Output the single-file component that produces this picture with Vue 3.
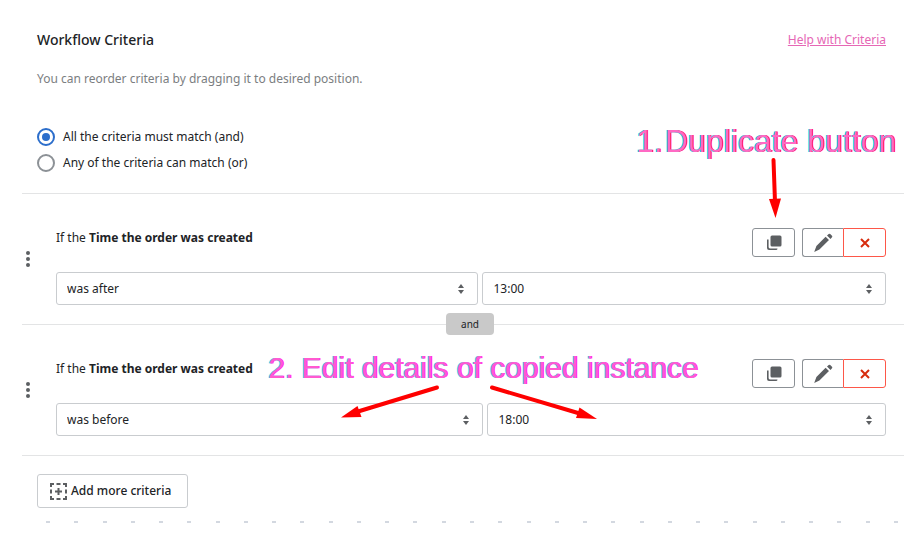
<template>
  <main class="workflow">
    <header class="workflow__header">
      <div class="workflow__title">
        <h2 class="workflow__h2">Workflow Criteria</h2>
        <a href="#" class="workflow__help">Help with Criteria</a>
      </div>
      <p class="workflow__hint">
        You can reorder criteria by dragging it to desired position.
      </p>
      <div class="workflow__modes">
        <label v-for="item in modes" :key="item.value" class="mode">
          <input
            v-model="mode"
            type="radio"
            name="mode"
            class="mode__input"
            :value="item.value"
          />
          {{ item.label }}
        </label>
      </div>
    </header>

    <section
      v-for="(item, index) in criteria"
      :key="item.id"
      class="criterion"
    >
      <span v-if="index > 0" class="criterion__join">and</span>
      <svg class="criterion__handle" width="4" height="16" viewBox="0 0 4 16">
        <circle cx="2" cy="2" r="2" />
        <circle cx="2" cy="8" r="2" />
        <circle cx="2" cy="14" r="2" />
      </svg>
      <div class="criterion__body">
        <div class="criterion__top">
          <p class="criterion__name">If the <b>Time the order was created</b></p>
          <div class="criterion__actions">
            <button type="button" class="action" aria-label="Duplicate">
              <svg width="16" height="16" viewBox="0 0 16 16">
                <rect x="4.500" y="0.500" width="11" height="11" rx="1.500" />
                <path
                  d="M1 4.500H2.600V12Q2.600 13.400 4 13.400H11.500Q11.500 15 10 15H3Q1 15 1 13Z"
                />
              </svg>
            </button>
            <div class="criterion__group">
              <button
                type="button"
                class="action action--first"
                aria-label="Edit"
              >
                <svg width="20" height="20" viewBox="0 0 20 20">
                  <path
                    d="M12.600 3.700L16 7.100L6.400 16.500L1.200 19L3.400 13ZM14 2.500L15.700 1Q16.500 .3 17.200 1L19 2.800Q19.700 3.500 19 4.300L17.500 6Z"
                  />
                </svg>
              </button>
              <button
                type="button"
                class="action action--danger"
                aria-label="Remove"
              >
                <svg width="10" height="10" viewBox="0 0 10 10">
                  <path d="M1 1L9 9M9 1L1 9" />
                </svg>
              </button>
            </div>
          </div>
        </div>
        <div class="criterion__fields">
          <div
            v-for="field in item.fields"
            :key="field.label"
            class="field"
            :style="{ flexGrow: field.grow }"
          >
            <select
              v-model="field.value"
              class="field__select"
              :aria-label="field.label"
            >
              <option v-for="option in field.options" :key="option">
                {{ option }}
              </option>
            </select>
            <svg class="field__icon" width="6" height="10" viewBox="0 0 6 10">
              <path d="M3 0L6 4H0ZM0 6H6L3 10Z" />
            </svg>
          </div>
        </div>
      </div>
    </section>

    <footer class="workflow__footer">
      <button type="button" class="add">
        <svg width="17" height="17" viewBox="0 0 17 17">
          <path
            d="M1 4V1H4M6.5 1H10.5M13 1H16V4M16 6.5V10.5M16 13V16H13M10.5 16H6.5M4 16H1V13M1 10.5V6.5M8.5 5V12M5 8.5H12"
          />
        </svg>
        Add more criteria
      </button>
      <div class="dots">
        <span v-for="n in 31" :key="n" class="dots__item"></span>
      </div>
    </footer>

    <p class="note note--first"><span>1.</span><span>Duplicate button</span></p>
    <p class="note note--second">2. Edit details of copied instance</p>
    <svg class="arrows" width="922" height="538" viewBox="0 0 922 538">
      <path class="arrows__line" d="M773.5 160L775 202" />
      <path class="arrows__head" d="M769 199L781 198.5L775.5 218Z" />
      <path class="arrows__line" d="M437 387.5L358 411.5" />
      <path class="arrows__head" d="M341 417.5L357.5 406L361.5 417Z" />
      <path class="arrows__line" d="M492 387.5L578 413" />
      <path class="arrows__head" d="M597 419L579.5 407.5L576 418Z" />
    </svg>
  </main>
</template>

<script setup>
import { ref } from "vue";

const mode = ref("and");

const modes = [
  { value: "and", label: "All the criteria must match (and)" },
  { value: "or", label: "Any of the criteria can match (or)" },
];

const conditions = ["was after", "was before"];
const times = ["13:00", "18:00"];

const criteria = ref([
  {
    id: 1,
    fields: [
      { label: "Condition", value: "was after", options: conditions, grow: 423 },
      { label: "Time", value: "13:00", options: times, grow: 404 },
    ],
  },
  {
    id: 2,
    fields: [
      { label: "Condition", value: "was before", options: conditions, grow: 428 },
      { label: "Time", value: "18:00", options: times, grow: 399 },
    ],
  },
]);
</script>

<style>
body {
  background-color: #fff;
}
</style>

<style scoped>
.workflow {
  --ink: #212326;
  --icon: #5c5f62;
  --line: #e3e4e5;
  --border: #c9cccf;
  color: var(--ink);
  font-family: "Noto Sans", "Open Sans", sans-serif;
  font-size: 12px;
  line-height: 20px;
  padding: 30px 18px 0 22px;
}

.workflow *,
.workflow *::before {
  box-sizing: border-box;
}

.workflow p,
.workflow h2 {
  margin: 0;
}

.workflow button,
.workflow select {
  color: inherit;
  font: inherit;
}

.workflow__header {
  padding: 0 18px 20px 15px;
}

.workflow__title {
  align-items: center;
  display: flex;
  justify-content: space-between;
}

.workflow__h2 {
  font-size: 14px;
  font-weight: 500;
}

.workflow__help {
  color: #e667b5;
}

.workflow .workflow__hint {
  color: #7b7e81;
  margin-top: 19px;
}

.workflow__modes {
  display: flex;
  flex-direction: column;
  gap: 6px;
  padding-top: 38px;
}

.mode {
  align-items: center;
  display: flex;
  gap: 8px;
}

.mode__input {
  appearance: none;
  background-color: #fff;
  border: 2px solid #8c9196;
  border-radius: 50%;
  height: 18px;
  margin: 0;
  width: 18px;
}

.mode__input:checked {
  border-color: #2c6ecb;
  padding: 3px;
}

.mode__input:checked::before {
  background-color: #2c6ecb;
  border-radius: 50%;
  content: "";
  display: block;
  height: 8px;
  width: 8px;
}

.criterion {
  align-items: center;
  border-top: 1px solid var(--line);
  display: flex;
  gap: 26px;
  padding: 34px 18px 19px 4px;
  position: relative;
}

.criterion__join {
  background-color: #c9c9c9;
  border-radius: 4px;
  font-size: 10px;
  left: 50%;
  line-height: 22px;
  margin-left: -17px;
  position: absolute;
  text-align: center;
  top: -12px;
  width: 48px;
}

.criterion__handle {
  fill: var(--icon);
  flex: none;
  margin: 0 0 15px;
}

.criterion__body {
  flex: 1;
  min-width: 0;
}

.criterion__top {
  display: flex;
  justify-content: space-between;
}

.criterion__name b {
  font-weight: 700;
}

.criterion__actions {
  display: flex;
  gap: 7px;
}

.criterion__group {
  display: flex;
}

.action {
  align-items: center;
  background-color: #fff;
  border: 1px solid #8c9196;
  border-radius: 3px;
  display: flex;
  height: 29px;
  justify-content: center;
  padding: 0;
  width: 43px;
}

.action svg {
  fill: var(--icon);
}

.action--first {
  border-radius: 3px 0 0 3px;
  border-right: 0;
  width: 41px;
}

.action--danger {
  border-color: #fd5749;
  border-radius: 0 3px 3px 0;
}

.action--danger svg {
  stroke: #d72c0d;
  stroke-width: 2;
}

.criterion__fields {
  display: flex;
  gap: 4px;
  padding-top: 15px;
}

.field {
  flex: 1 1 0;
  position: relative;
}

.field__select {
  appearance: none;
  background-color: #fff;
  border: 1px solid var(--border);
  border-radius: 3px;
  display: block;
  height: 33px;
  padding: 0 30px 0 10px;
  width: 100%;
}

.field__icon {
  fill: var(--icon);
  pointer-events: none;
  position: absolute;
  right: 14px;
  top: 12px;
}

.workflow__footer {
  border-top: 1px solid var(--line);
  padding: 18px 6px 0 15px;
}

.workflow .add {
  align-items: center;
  background-color: #fff;
  border: 1px solid var(--border);
  border-radius: 3px;
  display: flex;
  font-weight: 500;
  gap: 4px;
  height: 34px;
  padding: 0 16px 0 12px;
}

.add svg {
  fill: none;
  stroke: var(--icon);
  stroke-width: 2;
}

.dots {
  display: flex;
  justify-content: space-between;
  padding: 13px 0 0 9px;
}

.dots__item {
  background-color: #d3d8e0;
  height: 2px;
  width: 4px;
}

.note {
  font-family: "Liberation Sans", sans-serif;
  line-height: 32px;
  position: absolute;
  white-space: nowrap;
}

.note--first {
  color: #ff69c4;
  display: flex;
  font-size: 32px;
  gap: 2px;
  right: 26px;
  text-shadow: -1px 0 #00f0f0, 1px 0 #ff0a5a;
  top: 125px;
}

.note--second {
  color: #ff5ad0;
  font-size: 30px;
  left: 268px;
  text-shadow: -1px 0 #50e8f0, 1px 0 #ff28f0;
  top: 352px;
}

.arrows {
  left: 0;
  pointer-events: none;
  position: absolute;
  top: 0;
}

.arrows__line {
  stroke: #fe0000;
  stroke-linecap: round;
  stroke-width: 4;
}

.arrows__head {
  fill: #fe0000;
}
</style>
